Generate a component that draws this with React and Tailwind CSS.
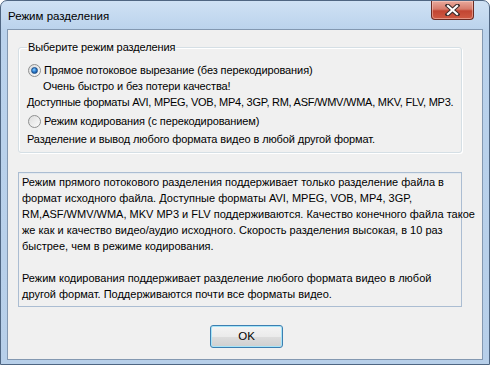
import React from "react";

// Win7-style radio button
function Radio({ checked }) {
  return (
    <span className="inline-flex h-[13px] w-[13px] shrink-0 items-center justify-center rounded-full border border-[#8e8f8f] bg-gradient-to-br from-[#dcdcdc] to-[#fbfbfb]">
      {checked && (
        <span className="h-[7px] w-[7px] rounded-full border border-[#1c4f8a] bg-[radial-gradient(circle_at_40%_35%,#8ad2ff_0%,#2f7fd1_45%,#123f7c_100%)]" />
      )}
    </span>
  );
}

function CloseButton() {
  return (
    <div className="absolute right-[15px] top-0 flex h-[19px] w-[43px] items-center justify-center rounded-b-[4px] border border-t-0 border-[#6b2a22] bg-[linear-gradient(#e9a99c_0%,#d67b6b_45%,#c24532_55%,#cf5a43_100%)] shadow-[inset_0_0_0_1px_rgba(255,220,210,0.45)]">
      <svg width="15" height="12" viewBox="0 0 15 12">
        <path d="M2.5 1.5 L12.5 10.5 M12.5 1.5 L2.5 10.5" stroke="#3a2a2a" strokeWidth="4.2" strokeLinecap="square" />
        <path d="M3 2 L12 10 M12 2 L3 10" stroke="#ffffff" strokeWidth="2.2" strokeLinecap="square" />
      </svg>
    </div>
  );
}

export default function App() {
  const font = { fontFamily: '"Liberation Sans", Arial, sans-serif' };
  return (
    <div className="h-[365px] w-[490px] overflow-hidden bg-white text-[11px] leading-[16px] text-black" style={font}>
      <div className="relative flex h-[365px] w-[490px] flex-col rounded-t-[7px] border border-[#4f6682] bg-[linear-gradient(#cfe1f4,#bad2ec_30px,#b7cfe9)]">
        {/* Title bar */}
        <div className="flex h-[28px] items-center pl-[7px] pt-[1px] text-[11.5px]">Режим разделения</div>
        <CloseButton />

        {/* Client area */}
        <div className="mx-[6px] mb-[4px] flex flex-1 flex-col border border-[#8398b1] bg-[#f0f0f0] pl-[10px] pt-[9px]">
          <fieldset className="w-[444px] min-w-0 rounded-[3px] border border-[#d5dfe5] pb-[5px] pl-[8px] tracking-[-0.1px] shadow-[inset_1px_1px_0_#fff,1px_1px_0_#fff]">
            <legend className="px-[1px]">Выберите режим разделения</legend>
            <div className="mt-[7px] flex items-center gap-[2px] pl-[1px]">
              <Radio checked />
              <span className="pl-[1px]">Прямое потоковое вырезание (без перекодирования)</span>
            </div>
            <div className="pl-[16px]">Очень быстро и без потери качества!</div>
            <div className="whitespace-nowrap tracking-[-0.25px]">Доступные форматы AVI, MPEG, VOB, MP4, 3GP, RM, ASF/WMV/WMA, MKV, FLV, MP3.</div>
            <div className="mt-[3px] flex items-center gap-[2px] pl-[1px]">
              <Radio />
              <span className="pl-[1px]">Режим кодирования (с перекодированием)</span>
            </div>
            <div className="mt-[2px]">Разделение и вывод любого формата видео в любой другой формат.</div>
          </fieldset>

          <div className="mt-[19px] h-[135px] w-[444px] whitespace-nowrap border border-[#abbdd2] bg-[#f0f0f0] pl-[3px] pt-[1px] shadow-[inset_0_1px_0_#e3e9ef]">
            Режим прямого потокового разделения поддерживает только разделение файла в<br />
            формат исходного файла. Доступные форматы AVI, MPEG, VOB, MP4, 3GP,<br />
            RM,ASF/WMV/WMA, MKV MP3 и FLV поддерживаются. Качество конечного файла такое<br />
            же как и качество видео/аудио исходного. Скорость разделения высокая, в 10 раз<br />
            быстрее, чем в режиме кодирования.<br />
            <br />
            Режим кодирования поддерживает разделение любого формата видео в любой<br />
            другой формат. Поддерживаются почти все форматы видео.
          </div>

          <div className="mt-[18px] flex pl-[192px]">
            <button className="flex h-[23px] w-[73px] items-center justify-center rounded-[3px] border border-[#3c7fb1] bg-[linear-gradient(#f4f4f4_0%,#ebebeb_50%,#dddddd_51%,#cfcfcf_100%)] pb-[1px] text-[11.5px] shadow-[inset_0_0_0_1px_#a6e4f8]">
              OK
            </button>
          </div>
        </div>
      </div>
    </div>
  );
}
